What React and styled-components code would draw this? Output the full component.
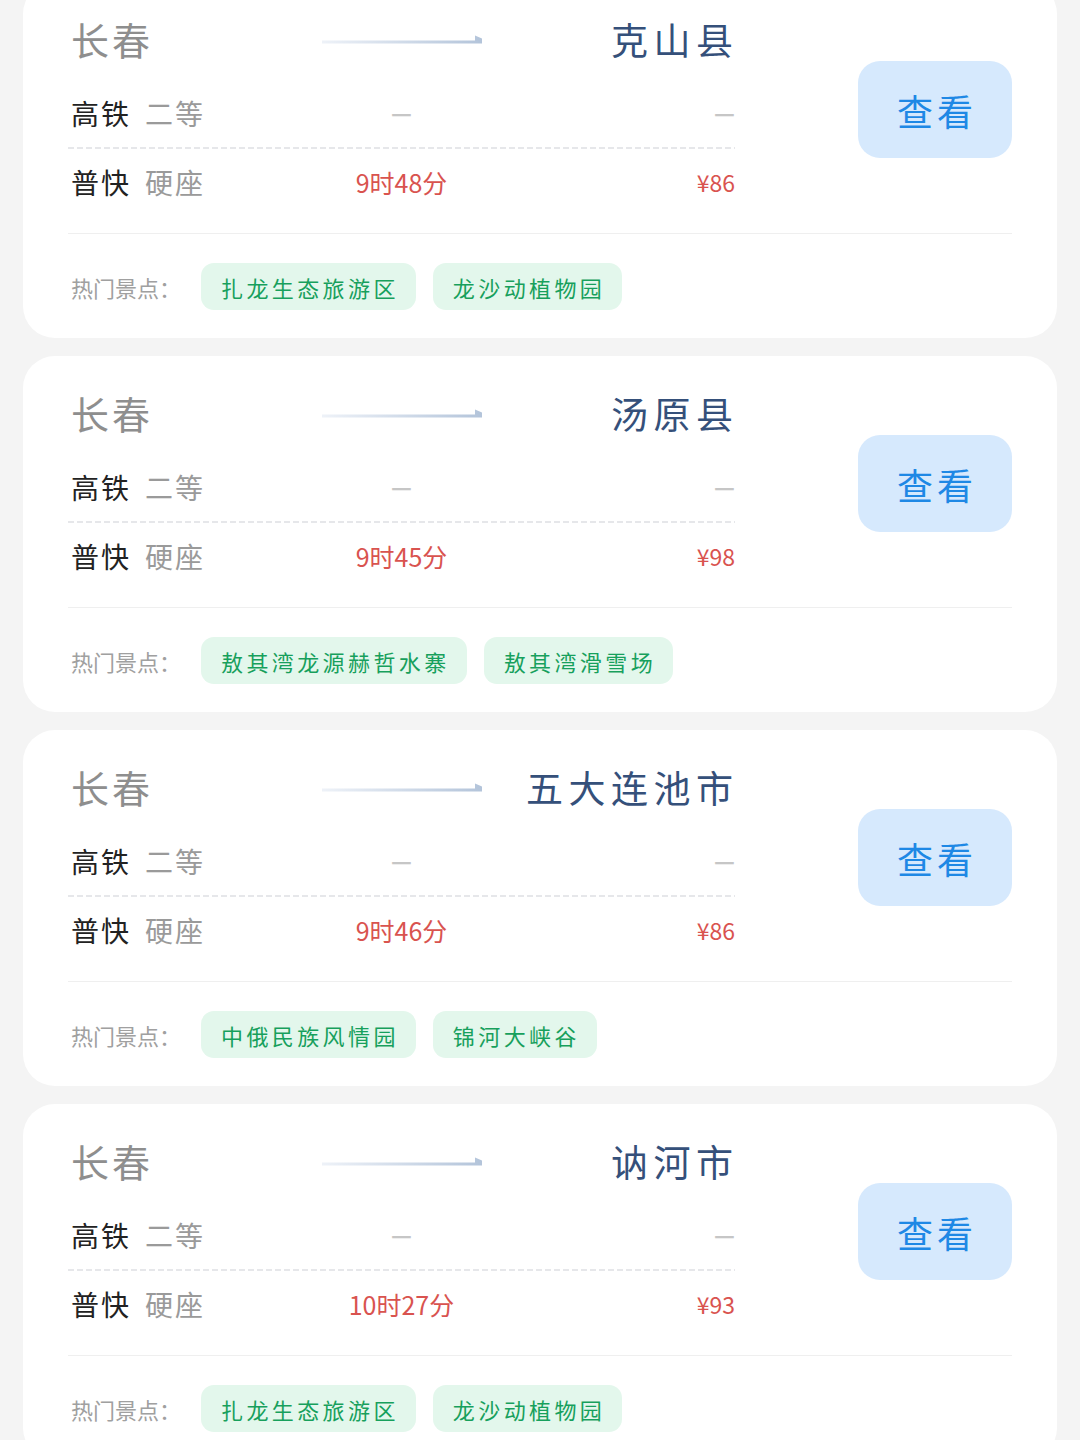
import React from "react";
import styled, { createGlobalStyle } from "styled-components";

const GlobalStyle = createGlobalStyle`
  html, body {
    margin: 0;
    padding: 0;
    background: #f4f4f4;
  }
  body {
    font-family: "Noto Sans CJK SC", "Noto Sans", sans-serif;
  }
`;

const Page = styled.div`
  padding: 0 23px;
  margin-top: -18px;
  display: flex;
  flex-direction: column;
  gap: 18px;
`;

const Card = styled.div`
  background: #ffffff;
  border-radius: 32px;
  padding: 33px 45px 28px 45px;
  display: flex;
  flex-direction: column;
`;

const Top = styled.div`
  display: flex;
  justify-content: space-between;
  align-items: flex-start;
`;

const Info = styled.div`
  width: 667px;
  display: flex;
  flex-direction: column;
`;

const Grid3 = styled.div`
  display: grid;
  grid-template-columns: 1fr auto 1fr;
  align-items: center;
  height: 48px;
  margin-top: ${(p) => p.$mt || 0}px;
`;

const From = styled.div`
  font-size: 38px;
  line-height: 48px;
  color: #8e8e8e;
  letter-spacing: 3px;
  padding-left: 3px;
`;

const To = styled.div`
  justify-self: end;
  font-size: 37px;
  line-height: 48px;
  color: #35507a;
  letter-spacing: 5.5px;
  margin-right: -3.5px;
`;

const ArrowWrap = styled.div`
  width: 160px;
  height: 10px;
  display: flex;
  padding-top: 2px;
`;

const Label = styled.div`
  display: flex;
  gap: 14px;
  font-size: 28px;
  line-height: 48px;
  padding-left: 3px;
`;

const Train = styled.span`
  color: #222222;
  letter-spacing: 2px;
`;

const Seat = styled.span`
  color: #9a9a9a;
  letter-spacing: 2px;
`;

const Mid = styled.div`
  font-size: ${(p) => (p.$empty ? 23 : 25)}px;
  font-weight: ${(p) => (p.$empty ? 700 : 400)};
  line-height: 48px;
  color: ${(p) => (p.$empty ? "#c6c6c6" : "#d9534f")};
  text-align: center;
  margin-top: ${(p) => (p.$empty ? -3 : 0)}px;
`;

const Right = styled.div`
  justify-self: end;
  font-size: 23px;
  font-weight: ${(p) => (p.$empty ? 700 : 400)};
  line-height: 48px;
  color: ${(p) => (p.$empty ? "#c6c6c6" : "#d9534f")};
  margin-top: ${(p) => (p.$empty ? -3 : 0)}px;
`;

const Dashed = styled.div`
  height: 2px;
  margin-top: 10px;
  background-image: repeating-linear-gradient(
    to right,
    #e6e7ea 0 6px,
    transparent 6px 9px
  );
`;

const ViewButton = styled.button`
  margin-top: 46px;
  width: 154px;
  height: 97px;
  border: none;
  border-radius: 22px;
  background: #d6e9fd;
  color: #1e88e5;
  font-family: inherit;
  font-size: 36px;
  letter-spacing: 4px;
  padding: 0 0 0 4px;
  cursor: pointer;
`;

const Divider = styled.div`
  height: 1px;
  background: #efefef;
  margin-top: 27px;
`;

const Spots = styled.div`
  display: flex;
  align-items: center;
  margin-top: 29px;
  height: 47px;
`;

const SpotsLabel = styled.span`
  font-size: 22px;
  color: #a0a0a0;
  margin-right: 20px;
  padding-left: 3px;
`;

const Tags = styled.div`
  display: flex;
  gap: 17px;
`;

const Tag = styled.span`
  display: inline-flex;
  align-items: center;
  height: 47px;
  padding: 0 17px 0 20px;
  border-radius: 13px;
  background: #e3f7ec;
  color: #17a05c;
  font-size: 22px;
  letter-spacing: 3.4px;
`;

const Arrow = () => (
  <ArrowWrap>
    <svg width="160" height="10" viewBox="0 0 160 10">
      <defs>
        <linearGradient id="arrowGrad" x1="0" x2="1" y1="0" y2="0">
          <stop offset="0" stopColor="#eef2f8" />
          <stop offset="1" stopColor="#b3c4da" />
        </linearGradient>
      </defs>
      <polygon
        points="0,5.5 153,5.5 153,0.5 160,3.5 160,8.5 0,8.5"
        fill="url(#arrowGrad)"
      />
    </svg>
  </ArrowWrap>
);

const routes = [
  {
    to: "克山县",
    time: "9时48分",
    price: "¥86",
    tags: ["扎龙生态旅游区", "龙沙动植物园"],
  },
  {
    to: "汤原县",
    time: "9时45分",
    price: "¥98",
    tags: ["敖其湾龙源赫哲水寨", "敖其湾滑雪场"],
  },
  {
    to: "五大连池市",
    time: "9时46分",
    price: "¥86",
    tags: ["中俄民族风情园", "锦河大峡谷"],
  },
  {
    to: "讷河市",
    time: "10时27分",
    price: "¥93",
    tags: ["扎龙生态旅游区", "龙沙动植物园"],
  },
];

const RouteCard = ({ route }) => (
  <Card>
    <Top>
      <Info>
        <Grid3>
          <From>长春</From>
          <Arrow />
          <To>{route.to}</To>
        </Grid3>
        <Grid3 $mt={26}>
          <Label>
            <Train>高铁</Train>
            <Seat>二等</Seat>
          </Label>
          <Mid $empty>—</Mid>
          <Right $empty>—</Right>
        </Grid3>
        <Dashed />
        <Grid3 $mt={9}>
          <Label>
            <Train>普快</Train>
            <Seat>硬座</Seat>
          </Label>
          <Mid>{route.time}</Mid>
          <Right>{route.price}</Right>
        </Grid3>
      </Info>
      <ViewButton>查看</ViewButton>
    </Top>
    <Divider />
    <Spots>
      <SpotsLabel>热门景点：</SpotsLabel>
      <Tags>
        {route.tags.map((t) => (
          <Tag key={t}>{t}</Tag>
        ))}
      </Tags>
    </Spots>
  </Card>
);

export default function App() {
  return (
    <>
      <GlobalStyle />
      <Page>
        {routes.map((r) => (
          <RouteCard key={r.to} route={r} />
        ))}
      </Page>
    </>
  );
}
